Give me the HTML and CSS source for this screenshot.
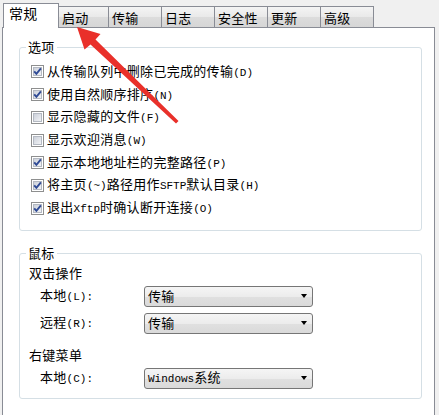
FILE: index.html
```html
<!DOCTYPE html>
<html lang="zh-CN">
<head>
<meta charset="utf-8">
<title>选项</title>
<link rel="stylesheet" href="styles.css">
</head>
<body>
<svg class="defs" aria-hidden="true">
  <defs>
    <linearGradient id="cbg" x1="0" y1="0" x2="1" y2="1">
      <stop offset="0" stop-color="#c9ced8"/>
      <stop offset="1" stop-color="#f4f5f7"/>
    </linearGradient>
    <symbol id="cb" viewBox="0 0 13 13">
      <rect x="0.5" y="0.5" width="12" height="12" fill="#fff" stroke="#8e8f8f"/>
      <rect x="2.5" y="2.5" width="8" height="8" fill="url(#cbg)" stroke="#b4b9c2"/>
    </symbol>
    <symbol id="cbon" viewBox="0 0 13 13">
      <use href="#cb"/>
      <path d="M3.2 6.3 L5.4 8.8 L9.9 3.3" fill="none" stroke="#2f4a95" stroke-width="1.9"/>
    </symbol>
  </defs>
</svg>
<div class="window">
  <div class="tabs">
    <div class="tab active">常规</div>
    <div class="tab first">启动</div>
    <div class="tab">传输</div>
    <div class="tab">日志</div>
    <div class="tab">安全性</div>
    <div class="tab">更新</div>
    <div class="tab">高级</div>
  </div>
  <div class="panel">
    <section class="group options">
      <div class="legend">选项</div>
      <ul class="checks">
        <li class="check"><svg class="box"><use href="#cbon"/></svg><span>从传输队列中删除已完成的传输<span class="en">(D)</span></span></li>
        <li class="check"><svg class="box"><use href="#cbon"/></svg><span>使用自然顺序排序<span class="en">(N)</span></span></li>
        <li class="check"><svg class="box"><use href="#cb"/></svg><span>显示隐藏的文件<span class="en">(F)</span></span></li>
        <li class="check"><svg class="box"><use href="#cb"/></svg><span>显示欢迎消息<span class="en">(W)</span></span></li>
        <li class="check"><svg class="box"><use href="#cbon"/></svg><span>显示本地地址栏的完整路径<span class="en">(P)</span></span></li>
        <li class="check"><svg class="box"><use href="#cbon"/></svg><span>将主页<span class="en">(~)</span>路径用作<span class="en">SFTP</span>默认目录<span class="en">(H)</span></span></li>
        <li class="check"><svg class="box"><use href="#cbon"/></svg><span>退出<span class="en">Xftp</span>时确认断开连接<span class="en">(O)</span></span></li>
      </ul>
    </section>
    <section class="group mouse">
      <div class="legend">鼠标</div>
      <div class="subhead">双击操作</div>
      <div class="field first-field">
        <span class="label">本地<span class="en">(L):</span></span>
        <div class="select">传输</div>
      </div>
      <div class="field">
        <span class="label">远程<span class="en">(R):</span></span>
        <div class="select">传输</div>
      </div>
      <div class="subhead second">右键菜单</div>
      <div class="field first-field">
        <span class="label">本地<span class="en">(C):</span></span>
        <div class="select"><span><span class="en">Windows</span>系统</span></div>
      </div>
    </section>
  </div>
  <svg class="arrow" viewBox="0 0 439 415" aria-hidden="true">
    <polygon points="77,27 100.5,34 95.5,39.5 178.5,121 176,123.5 90.5,44.5 84.5,49.5" fill="#e9302a"/>
  </svg>
</div>
</body>
</html>
```
FILE: styles.css
```css
* {
  box-sizing: border-box;
}

html, body {
  margin: 0;
  padding: 0;
}

body {
  width: 439px;
  height: 415px;
  overflow: hidden;
  background: #f0f0f0;
  font-family: "Noto Sans CJK SC", "Noto Sans", sans-serif;
  font-size: 13px;
  letter-spacing: 0.3px;
  color: #000;
}

.defs {
  position: absolute;
  width: 0;
  height: 0;
  overflow: hidden;
}

.en {
  font-family: "Liberation Mono", monospace;
  font-size: 11px;
  letter-spacing: 0;
}

.window {
  position: relative;
  height: 415px;
  padding: 3px 4px 0 2px;
}

/* tabs */
.tabs {
  display: flex;
  align-items: flex-end;
  height: 24px;
  padding-left: 1px;
}

.tab {
  width: 54px;
  height: 21px;
  margin-left: -1px;
  padding: 3px 0 0 3px;
  line-height: 16px;
  border: 1px solid #898c95;
  border-bottom: none;
  background: linear-gradient(#f4f4f4, #e9e9e9 50%, #dcdcdc 51%, #d6d6d6);
}

.tab.first {
  width: 51px;
}

.tab.active {
  position: relative;
  z-index: 1;
  width: 56px;
  height: 25px;
  margin-left: 0;
  margin-bottom: -1px;
  padding: 1px 0 0 5px;
  font-size: 14px;
  background: #fff;
}

/* panel */
.panel {
  height: 388px;
  padding: 0 12px 0 16px;
  background: #fff;
  border: 1px solid #898c95;
  border-bottom: none;
}

.group {
  border: 1px solid #d5dfe5;
  border-radius: 3px;
}

.legend {
  width: fit-content;
  margin: -9px 0 0 6px;
  padding: 0 2px;
  line-height: 16px;
  background: #fff;
}

.options {
  margin-top: 19px;
  padding-bottom: 10.5px;
}

.checks {
  list-style: none;
  margin: 0;
  padding: 5.6px 0 0 11px;
}

.check {
  display: flex;
  align-items: center;
  gap: 3px;
  height: 22.7px;
  line-height: 16px;
}

.box {
  width: 13px;
  height: 13px;
  flex: none;
}

.mouse {
  margin-top: 22px;
  padding-bottom: 9px;
}

.subhead {
  margin-top: 4px;
  padding-left: 9px;
  line-height: 16px;
}

.subhead.second {
  margin-top: 13px;
}

.field {
  display: flex;
  align-items: center;
  height: 21px;
  margin-top: 6px;
  line-height: 16px;
}

.field.first-field {
  margin-top: 5px;
}

.label {
  width: 124px;
  padding-left: 20px;
  flex: none;
}

.select {
  display: flex;
  align-items: center;
  justify-content: space-between;
  width: 169px;
  height: 21px;
  padding: 0 5px 0 3px;
  border: 1px solid #767676;
  border-radius: 3px;
  background: linear-gradient(#f5f5f5, #ececec 50%, #e0e0e0 51%, #dadada);
}

.select::after {
  content: "";
  width: 0;
  height: 0;
  border-left: 3.5px solid transparent;
  border-right: 3.5px solid transparent;
  border-top: 4px solid #000;
}

.arrow {
  position: absolute;
  top: 0;
  left: 0;
  width: 439px;
  height: 415px;
  z-index: 2;
  pointer-events: none;
}
```
